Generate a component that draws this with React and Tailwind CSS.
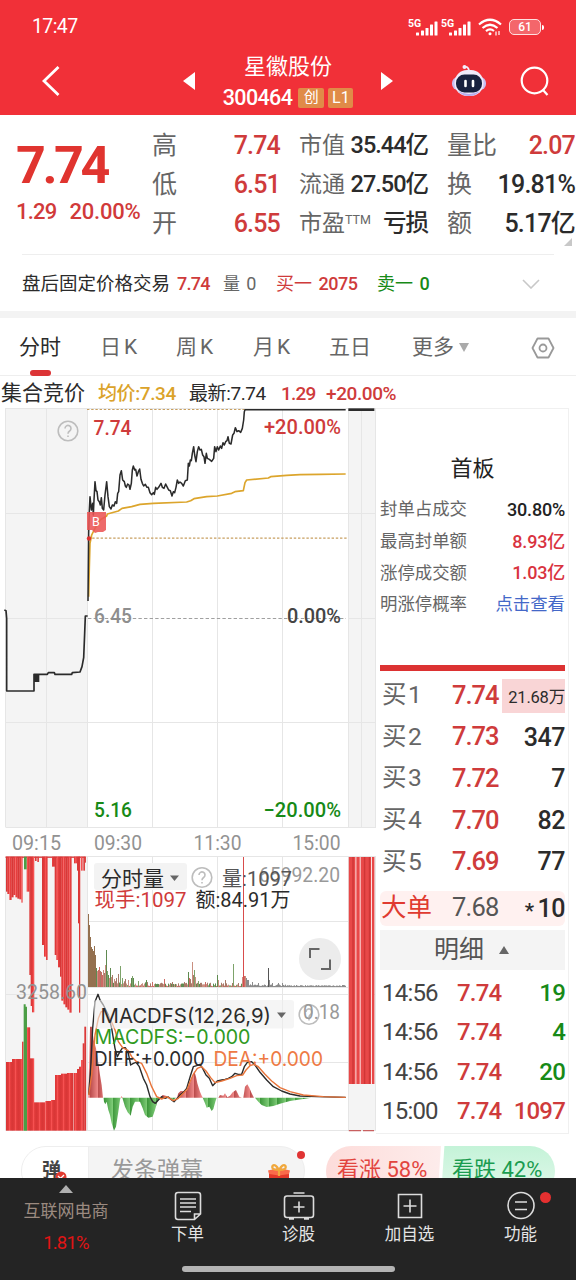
import { clsx } from 'clsx'

const RED = '#cf3b3b'
const GREEN = '#178a17'

const QUOTE_ROWS = [
  { a: '高', av: '7.74', b: '市值', bv: '35.44亿', c: '量比', cv: '2.07', up: true },
  { a: '低', av: '6.51', b: '流通', bv: '27.50亿', c: '换', cv: '19.81%' },
  { a: '开', av: '6.55', b: '市盈', sup: 'TTM', bv: '亏损', c: '额', cv: '5.17亿' },
]

const BOARD = [
  { label: '封单占成交', value: '30.80%', color: 'text-[#222]' },
  { label: '最高封单额', value: '8.93亿', color: 'text-[#d9333f]' },
  { label: '涨停成交额', value: '1.03亿', color: 'text-[#d9333f]' },
  { label: '明涨停概率', value: '点击查看', color: 'text-[#4468c8]' },
]

const BIDS = [
  { n: 1, price: '7.74', vol: '21.68万', hot: true },
  { n: 2, price: '7.73', vol: '347' },
  { n: 3, price: '7.72', vol: '7' },
  { n: 4, price: '7.70', vol: '82' },
  { n: 5, price: '7.69', vol: '77' },
]

const TRADES = [
  { time: '14:56', price: '7.74', vol: '19', color: 'text-[#178a17]' },
  { time: '14:56', price: '7.74', vol: '4', color: 'text-[#178a17]' },
  { time: '14:56', price: '7.74', vol: '20', color: 'text-[#178a17]' },
  { time: '15:00', price: '7.74', vol: '1097', color: 'text-[#cf3b3b]' },
]

// chart series, in thirds of a pixel
const PRICE = '264,603 266,400 268,330 270,290 274,330 278,310 280,345 282,300 285,245 288,272 291,275 294,300 298,305 301,315 304,293 307,325 311,330 315,285 320,245 324,290 328,320 333,327 337,315 342,318 346,305 350,310 353,280 356,275 360,225 364,212 368,240 373,245 376,258 379,262 383,252 387,255 390,268 394,250 397,210 400,198 404,210 407,208 411,228 415,215 419,207 423,238 427,250 431,258 436,253 441,262 445,262 450,278 455,284 460,278 463,283 467,262 471,268 476,262 483,250 487,262 492,265 497,252 502,262 506,270 511,272 516,288 520,275 524,278 528,262 532,240 536,250 540,246 545,250 550,258 556,242 562,240 565,190 568,198 571,180 574,182 577,160 581,140 584,165 588,185 592,155 596,140 600,150 604,148 608,165 612,170 615,190 619,160 622,175 628,178 635,184 641,175 644,140 648,155 652,140 656,150 661,138 665,145 669,128 673,135 677,125 681,122 684,110 688,130 693,132 698,105 702,100 706,83 711,95 716,92 722,97 727,85 731,60 733,35 735,29 1037,29'
const AVG = '266,590 268,500 270,430 275,405 285,385 300,360 320,348 322,342 355,333 366,325 395,320 420,313 460,310 560,306 572,302 582,296 620,290 652,288 695,280 705,275 730,272 735,248 740,240 805,234 812,230 860,226 900,224 960,223 1037,222'
const AUCTION = '13,630 18,632 20,655 20,873 102,873 102,823 142,823 145,818 163,818 165,823 215,823 217,818 240,816 246,800 251,773 254,700 256,648 263,648'

const DIFF = '266,330 272,250 278,130 285,50 294,28 300,45 310,60 325,90 335,130 345,190 352,215 360,200 368,188 376,188 385,205 392,240 400,235 408,232 418,245 430,280 440,300 450,335 458,350 466,355 475,345 485,335 495,340 505,336 515,345 522,350 532,340 540,330 550,322 560,310 572,270 580,245 590,242 600,238 608,250 618,270 628,280 638,302 645,295 652,288 665,285 675,283 685,280 695,275 705,265 715,268 725,268 733,245 742,232 755,230 765,240 780,262 800,285 820,305 845,318 870,327 900,333 950,335 1037,337'
const DEA = '266,330 275,270 285,150 295,100 303,80 315,80 330,100 345,135 355,170 368,188 385,197 395,215 410,230 425,235 440,265 455,305 470,335 485,342 500,335 520,347 535,340 550,325 562,312 570,290 580,268 592,250 605,245 618,258 632,278 645,293 665,288 690,280 710,272 728,270 738,255 750,242 762,238 775,245 795,268 815,288 840,308 870,320 910,330 970,335 1037,337'
const HIST_UP = 'M265 338V330L270 125H276L281 165 288 190 295 235 300 270 305 300 309 338ZM362 338L364 333 368 338ZM480 338L488 330 500 333 505 338ZM530 338L535 325 542 318 560 318 568 300 575 280 583 258 588 275 592 295 600 320 608 338ZM655 338L660 330 670 332 675 325 682 337 690 332 698 322 708 315 718 335 726 338ZM730 338L735 305 742 298 748 308 755 325 762 338Z'
const HIST_DOWN = 'M310 338L312 350 316 358 320 350 325 375 330 390 335 415 342 437 348 425 355 380 360 345 362 338ZM367 338L375 365 383 382 392 392 398 365 405 350 420 350 428 370 435 390 445 398 458 395 465 375 472 350 480 338ZM510 338L518 346 528 338ZM608 338L615 355 620 368 628 365 635 378 640 372 646 350 650 338ZM765 338L775 350 785 360 800 366 820 363 840 356 870 348 910 342 935 338Z'

// [x, width, bottom] bars hanging from the top of the auction column
const HANGING = [
  [18, 4, 125], [22, 6, 132], [28, 6, 150], [34, 6, 142], [40, 6, 135], [46, 6, 142], [52, 6, 146], [58, 6, 148], [64, 3, 158],
  [80, 8, 125], [88, 4, 375], [92, 4, 468], [96, 6, 487], [105, 4, 33], [112, 4, 36], [126, 6, 285], [132, 6, 320], [138, 4, 330],
  [156, 8, 50], [164, 5, 315], [169, 5, 330], [174, 6, 352], [180, 4, 380], [184, 6, 452], [190, 6, 463], [196, 6, 472], [202, 6, 479], [208, 6, 488],
  [222, 8, 40], [231, 3, 62], [234, 4, 220], [237, 3, 488], [243, 4, 62], [250, 4, 62], [255, 2, 38],
]

// [x, width, top] bars rising from the bottom
const STANDING = [
  [18, 18, 231], [36, 30, 222], [66, 4, 170], [81, 9, 127], [90, 12, 220], [102, 34, 352], [136, 17, 348], [153, 12, 345],
  [165, 18, 270], [183, 18, 266], [201, 19, 264], [222, 9, 264], [231, 6, 252], [237, 6, 245], [243, 5, 225], [248, 5, 175], [253, 5, 125],
]

const PEAKS = {
  0: 73, 1: 62, 2: 50, 3: 40, 4: 38, 5: 36, 6: 41, 7: 32, 8: 19, 9: 16, 10: 17, 11: 20, 12: 16, 13: 15, 14: 12, 15: 17, 16: 14, 17: 22, 18: 37,
  19: 16, 20: 12, 21: 9, 22: 19, 23: 10, 24: 12, 26: 8, 28: 9, 30: 13, 32: 21, 34: 9, 37: 8, 40: 7, 43: 9, 44: 11, 45: 9, 50: 6, 58: 7, 64: 5, 76: 8,
  84: 5, 96: 5, 100: 15, 101: 9, 102: 8, 104: 25, 105: 12, 106: 17, 107: 10, 110: 6, 117: 5, 129: 12, 130: 7, 137: 7, 144: 4, 145: 23, 154: 10, 155: 130,
  156: 11, 157: 11, 158: 9, 159: 7, 160: 7, 164: 5, 170: 4, 180: 19, 181: 7, 184: 4, 190: 4, 194: 4,
}

const VOLUME = Array.from({ length: 258 }, (_, i) => {
  const noise = Math.abs(Math.sin(i * 12.9898) * 43758.5453) % 1
  const decay = i < 60 ? 5 : i < 156 ? 3.5 : i < 200 ? 2 : 1.2
  const late = i > 157
  const color = late ? '#8b8b8b' : ['#cc6a64', '#7da36a', '#c98f80', '#5f8a50', '#a87a68'][Math.floor(noise * 5)]
  return { x: 88 + i, h: PEAKS[i] || 0.8 + noise * decay, color: i === 155 ? '#d84c4c' : i === 180 ? '#555' : i < 8 ? '#94704f' : color }
})

function Label({ x, y, w, size = 20.5, fill = RED, weight = 500, children }) {
  return (
    <text x={x} y={y} textLength={w} lengthAdjust="spacingAndGlyphs" fontSize={size} fill={fill} fontWeight={weight}>
      {children}
    </text>
  )
}

function Help({ cx, cy }) {
  return (
    <g>
      <circle cx={cx} cy={cy} r="9.8" fill="none" stroke="#bdbdbd" strokeWidth="1.6" />
      <path d={`M${cx - 3} ${cy - 2.5}a3 3 0 1 1 4.6 2.5q-1.6 1-1.6 2.8M${cx} ${cy + 4.5}v1.6`} fill="none" stroke="#bdbdbd" strokeWidth="1.6" />
    </g>
  )
}

function Chart() {
  return (
    <svg viewBox="0 408 376 726" className="h-[726px] w-[376px] shrink-0">
      <defs>
        <linearGradient id="stripes" gradientUnits="userSpaceOnUse" x1="0" y1="0" x2="18" y2="0" spreadMethod="repeat">
          <stop offset="0" stopColor="#d83636" />
          <stop offset=".4" stopColor="#e03a3a" />
          <stop offset=".55" stopColor="#fa5656" />
          <stop offset=".7" stopColor="#e84040" />
          <stop offset="1" stopColor="#d83636" />
        </linearGradient>
        <linearGradient id="upBars" gradientUnits="userSpaceOnUse" x1="6" y1="0" x2="30" y2="0" spreadMethod="repeat">
          <stop offset="0" stopColor="#b94a4a" />
          <stop offset="1" stopColor="#f08a8a" />
        </linearGradient>
        <linearGradient id="downBars" gradientUnits="userSpaceOnUse" x1="0" y1="0" x2="26" y2="0" spreadMethod="repeat">
          <stop offset="0" stopColor="#3c963a" />
          <stop offset="1" stopColor="#7fcc78" />
        </linearGradient>
      </defs>

      {/* Backgrounds and grid */}
      <path d="M5 409H87V827H5ZM348 409H376V827H348ZM5 857H87V1131H5ZM348 857H376V1131H348Z" fill="#f4f4f4" />
      <g stroke="#e6e6e6" strokeWidth="1" fill="none">
        <path d="M5.5 408.5H376M5.5 513.5H376M5.5 618.5H87M348 618.5H376M5.5 722.5H376M5.5 827.5H376" />
        <path d="M5.5 856.5H376M87 921.5H348M87 987.5H348M5.5 994.5H376M87 1062.5H348M5.5 1130.5H376" />
        <path d="M5.5 408V827M46.5 408V827M87.5 408V827M152.5 408V827M217.5 408V827M282.5 408V827M348.5 408V827M361.5 408V827M375.5 408V827" />
        <path d="M5.5 857V1130M46.5 857V1130M87.5 857V1130M152.5 857V1130M217.5 857V1130M282.5 857V1130M348.5 857V1130M375.5 857V1130" />
      </g>
      <path d="M87 409.5H245M88 538.2H348" stroke="#c79f60" strokeWidth="1.2" strokeDasharray="2.4 1.8" />
      <path d="M88 618.5H346" stroke="#a0a0a0" strokeWidth="1.1" strokeDasharray="3.4 2.2" />

      {/* Price */}
      <Help cx={68} cy={431} />
      <g transform="translate(0 400) scale(0.33333)" fill="none" strokeLinejoin="round">
        <polyline points={AUCTION} stroke="#2b2b2b" strokeWidth="5" />
        <rect x="102" y="824" width="16" height="22" fill="#2b2b2b" />
        <polyline points={AVG} stroke="#dca52c" strokeWidth="5" />
        <polyline points={PRICE} stroke="#2b2b2b" strokeWidth="4.6" />
        <path d="M1045 29H1123" stroke="#2b2b2b" strokeWidth="8" />
      </g>
      <path d="M87 512H106V530L103 532H98L95 533L92 530H87Z" fill="#ec5555" fillOpacity=".88" />
      <text x="92" y="525.5" fontSize="12.5" fontWeight="400" fill="#fff">B</text>
      <circle cx="89" cy="538.5" r="2.2" fill="#dd3030" />
      <Label x={93.5} y={434.5} w={38}>7.74</Label>
      <Label x={264} y={434} w={77}>+20.00%</Label>
      <Label x={94} y={623} w={38} fill="#8e8e8e">6.45</Label>
      <Label x={287} y={623} w={54} fill="#444">0.00%</Label>
      <Label x={94} y={817} w={38} fill={GREEN}>5.16</Label>
      <Label x={263.5} y={817} w={77.5} fill={GREEN}>−20.00%</Label>
      <Label x={12} y={849.5} w={49} fill="#929292" weight={400}>09:15</Label>
      <Label x={94} y={849.5} w={48} fill="#929292" weight={400}>09:30</Label>
      <Label x={193.5} y={849.5} w={48} fill="#929292" weight={400}>11:30</Label>
      <Label x={292.5} y={849.5} w={48} fill="#929292" weight={400}>15:00</Label>

      {/* Auction volume */}
      <rect x="5.5" y="856.5" width="80" height="1.4" fill="#d84444" />
      <g transform="translate(0 850) scale(0.33333)" fill="url(#stripes)">
        {HANGING.map(([x, w, y]) => <rect key={x} x={x} y="20" width={w + 0.8} height={y - 20} />)}
        <rect x="72" y="20" width="8" height="38" fill="#4b9e45" />
      </g>
      <g transform="translate(0 985) scale(0.33333)">
        {STANDING.map(([x, w, y]) => <rect key={x} x={x} y={y} width={w + 0.5} height={437 - y} fill="url(#stripes)" />)}
        <path d="M71 437V58H77V65H81V437Z" fill="#4b9e45" />
      </g>
      <path d="M348.8 857H374.4V1084H348.8Z" fill="#e84848" />
      <path d="M353 857V1084M364.6 857V1084M369.5 857V1084" stroke="#d03636" strokeWidth="1.4" />
      <path d="M355.9 857V1084M360.2 857V1084M371.5 857V1084" stroke="#fde0e0" strokeWidth="1" />
      <path d="M348.8 1130.6H361M363 1130.6H374" stroke="#c86060" strokeWidth="1.2" />

      {/* Volume */}
      {VOLUME.map(v => <rect key={v.x} x={v.x} y={987 - v.h} width="1" height={v.h} fill={v.color} />)}
      <Label x={16} y={998.5} w={71} fill="#929292" weight={400}>3258.60</Label>
      <rect x="94" y="863" width="93" height="27" rx="3" fill="#f3f3f3" />
      <Label x={101} y={885.5} w={63} size={21} fill="#2b2b2b" weight={400}>分时量</Label>
      <path d="M170 875.5H179L174.5 881Z" fill="#666" />
      <Help cx={202} cy={877.5} />
      <Label x={259} y={882} w={81} fill="#999" weight={400}>65992.20</Label>
      <Label x={222} y={885.5} w={70} size={20} fill="#555" weight={400}>量:1097</Label>
      <Label x={94.5} y={906.5} w={92} fill="#d03a3a" weight={400}>现手:1097</Label>
      <Label x={195.5} y={906.5} w={95} fill="#2b2b2b" weight={400}>额:84.91万</Label>
      <circle cx="320" cy="959" r="21" fill="#ececec" />
      <path d="M310 958V949H319.5M321 969H330V959.5" fill="none" stroke="#666" strokeWidth="2" />

      {/* MACD */}
      <g transform="translate(0 985) scale(0.33333)" fill="none" strokeLinejoin="round">
        <path d={HIST_UP} fill="url(#upBars)" />
        <path d={HIST_DOWN} fill="url(#downBars)" />
        <polyline points={DIFF} stroke="#2b2b2b" strokeWidth="4.2" />
        <polyline points={DEA} stroke="#e8743a" strokeWidth="4.2" />
      </g>
      <rect x="94" y="1000" width="200" height="28.5" rx="3" fill="#eee" fillOpacity=".6" />
      <g fontFamily="Inter">
        <Label x={100.5} y={1023} w={170.5} size={20} fill="#2b2b2b" weight={400}>MACDFS(12,26,9)</Label>
        <Label x={94.5} y={1044} w={156} size={20} fill="#2f9a1f" weight={400}>MACDFS:−0.000</Label>
        <Label x={94} y={1066} w={111} size={20} fill="#2b2b2b" weight={400}>DIFF:+0.000</Label>
        <Label x={213.5} y={1066} w={109.5} size={20} fill="#ee7a44" weight={400}>DEA:+0.000</Label>
      </g>
      <path d="M277 1012.5H286L281.5 1018Z" fill="#666" />
      <Help cx={309} cy={1014.5} />
      <Label x={303} y={1019} w={37} fill="#999" weight={400}>0.18</Label>
    </svg>
  )
}

function Signal() {
  return (
    <div className="flex w-[33px] items-start">
      <span className="w-[7px] text-[10.5px] leading-[10px] font-bold">5G</span>
      <svg viewBox="0 0 24 16" className="mt-[1px] h-4 w-6 shrink-0" fill="#fff">
        <rect x="1" y="12.5" width="3" height="3" rx=".5" />
        <rect x="6" y="10.5" width="3" height="5" rx=".5" />
        <rect x="10.5" y="8" width="3" height="7.5" rx=".5" />
        <rect x="15" y="4.5" width="3" height="11" rx=".5" />
        <rect x="19.5" y="1.5" width="3" height="14" rx=".5" />
      </svg>
    </div>
  )
}

function Header() {
  return (
    <header className="h-[115px] bg-[#f13038] text-white">
      <div className="flex h-[54px] items-center justify-between pr-[32px] pl-[32px]">
        <span className="text-[19.5px] tracking-[-0.6px]">17:47</span>
        <div className="flex items-center">
          <Signal />
          <Signal />
          <svg viewBox="0 0 24 18" className="mr-[7px] ml-[4px] h-[18px] w-6" fill="none" stroke="#fff" strokeWidth="2.2">
            <path d="M1 6.5Q12 -3 23 6.5M4.5 10Q12 3.5 19.5 10M8 13.2Q12 9.8 16 13" />
            <circle cx="12" cy="15.8" r="1.5" fill="#fff" stroke="none" />
            <path d="M18 13.5V17.5M21 13V17" strokeWidth="1.2" />
          </svg>
          <div className="flex h-[16px] w-[32px] items-center justify-center rounded-[5px] border-[1.5px] border-[#ffe0e0] bg-[#f4666b]">
            <span className="text-[12px] leading-none font-medium">61</span>
          </div>
          <span className="ml-[1px] h-[5px] w-[2px] rounded-r bg-white" />
        </div>
      </div>
      <div className="flex h-[54px] items-center">
        <svg viewBox="0 0 18 32" className="ml-[42px] h-8 w-[18px]" fill="none" stroke="#fff" strokeWidth="2.8">
          <path d="M16.5 2L2 16L16.5 30" />
        </svg>
        <svg viewBox="0 0 12 20" className="ml-[123px] h-5 w-3" fill="#fff"><path d="M12 1V19L0 10Z" /></svg>
        <div className="flex w-[186px] flex-col items-center">
          <h1 className="text-[22px] leading-[28px]">星徽股份</h1>
          <div className="mt-[5px] flex items-center gap-[4px]">
            <span className="mr-[2px] text-[21.5px] leading-[24px] font-medium tracking-[-0.6px]">300464</span>
            <span className="flex h-[20px] w-[26px] items-center justify-center rounded-[2px] bg-[#e08b48] text-[15px] leading-none">创</span>
            <span className="flex h-[20px] w-[25px] items-center justify-center rounded-[2px] bg-[#e08b48] text-[16px] leading-none">L1</span>
          </div>
        </div>
        <svg viewBox="0 0 12 20" className="h-5 w-3" fill="#fff"><path d="M0 1V19L12 10Z" /></svg>
        <svg viewBox="0 0 36 34" className="ml-[58px] h-[34px] w-9">
          <path d="M13 3.5q4-2 5 3" fill="none" stroke="#f3eefc" strokeWidth="1.8" />
          <circle cx="13.5" cy="3" r="2" fill="#f3eefc" />
          <rect x="1" y="13" width="34" height="13" rx="6" fill="#c9bef2" />
          <rect x="3.5" y="6" width="29" height="26" rx="12.5" fill="#efeafb" />
          <path d="M7 27q11 6 22 0q-4 5-11 5t-11-5" fill="#b9acee" />
          <rect x="5" y="10.5" width="26" height="18" rx="8.5" fill="#18213f" />
          <path d="M14.5 17V22M22 17V22" stroke="#fff" strokeWidth="2.6" strokeLinecap="round" />
        </svg>
        <svg viewBox="0 0 30 32" className="ml-[33px] h-8 w-[30px]" fill="none" stroke="#fff" strokeWidth="2.2">
          <circle cx="14.5" cy="15.5" r="12.8" />
          <path d="M23 25L27.5 30" />
        </svg>
      </div>
    </header>
  )
}

function Quote() {
  return (
    <section className="flex h-[139px] pt-[11px]">
      <div className="w-[152px] pl-[16px] text-[#e0342f]">
        <div className="mt-[14px] text-[52px] leading-[52px] font-bold tracking-[-3.4px]">7.74</div>
        <div className="mt-[7px] flex gap-[13px] text-[22px] leading-[26px] font-medium text-[#d13a3a]">
          <span className="tracking-[-0.8px]">1.29</span>
          <span className="tracking-[-0.2px]">20.00%</span>
        </div>
      </div>
      <div className="relative w-[424px]">
        {QUOTE_ROWS.map(r => (
          <div key={r.a} className="flex h-[39px] items-center text-[#666]">
            <span className="w-[48px] text-[25px] leading-none">{r.a}</span>
            <span className="w-[80px] text-right text-[25px] leading-none font-medium tracking-[-0.8px] text-[#cf3b3b]">{r.av}</span>
            <span className="ml-[19px] flex w-[129px] items-center justify-between whitespace-nowrap">
              <span className="flex text-[23px] leading-none">
                {r.b}
                {r.sup && <sup className="top-0 text-[12.5px] leading-[15px]">{r.sup}</sup>}
              </span>
              <span className="text-[23.5px] leading-none font-medium tracking-[-1px] text-[#2b2b2b]">{r.bv}</span>
            </span>
            <span className="ml-[19px] flex w-[128px] items-center justify-between whitespace-nowrap">
              <span className="text-[25px] leading-none">{r.c}</span>
              <span className={clsx('text-[25px] leading-none font-medium tracking-[-0.8px]', r.up ? 'text-[#cf3b3b]' : 'text-[#2b2b2b]')}>{r.cv}</span>
            </span>
          </div>
        ))}
        <svg viewBox="0 0 8 8" className="absolute right-[4px] bottom-[8px] h-2 w-2" fill="#c8c8c8"><path d="M8 0V8H0Z" /></svg>
      </div>
    </section>
  )
}

function AfterHours() {
  return (
    <section className="mx-[22px] flex h-[57px] items-center border-t border-[#eee] pt-[2px] text-[17px] leading-none whitespace-nowrap">
      <span className="w-[155px] text-[18.5px] text-[#2b2b2b]">盘后固定价格交易</span>
      <span className="w-[46px] text-[18px] font-medium tracking-[-0.7px] text-[#cf3b3b]">7.74</span>
      <span className="w-[53px] text-[#666]">量 <span className="ml-[2px] text-[18px]">0</span></span>
      <span className="w-[101px] text-[18px] text-[#cf3b3b]">买一 <span className="ml-[2px] font-medium tracking-[-0.5px]">2075</span></span>
      <span className="text-[18px] text-[#178a17]">卖一 <span className="ml-[2px] font-medium">0</span></span>
      <svg viewBox="0 0 18 10" className="mr-[14px] ml-auto h-[10px] w-[18px]" fill="none" stroke="#c8c8c8" strokeWidth="1.6"><path d="M1 1L9 9L17 1" /></svg>
    </section>
  )
}

function Tabs() {
  return (
    <nav className="flex h-[58px] items-center border-b border-[#eee] pt-[2px] text-[21px] leading-none text-[#666]">
      <span className="relative ml-[19px] w-[81px] text-[#2b2b2b]">
        分时
        <span className="absolute top-[33px] left-[11px] h-[6px] w-[21px] rounded-[3px] bg-[#dc3436]" />
      </span>
      <span className="w-[76px] tracking-[3px]">日K</span>
      <span className="w-[77px] tracking-[3px]">周K</span>
      <span className="w-[76px] tracking-[3px]">月K</span>
      <span className="w-[83px]">五日</span>
      <span className="flex items-center gap-[5px]">
        更多
        <svg viewBox="0 0 10 9" className="h-[9px] w-[10px]" fill="#aaa"><path d="M0 0H10L5 9Z" /></svg>
      </span>
      <svg viewBox="0 0 24 24" className="mr-[21px] ml-auto h-6 w-6" fill="none" stroke="#999" strokeWidth="1.8">
        <path d="M6.5 2.5H17.5L22.5 12L17.5 21.5H6.5L1.5 12Z" strokeLinejoin="round" />
        <circle cx="12" cy="12" r="3.5" />
      </svg>
    </nav>
  )
}

function OrderBook() {
  return (
    <aside className="flex w-[193px] flex-col border-y border-r border-[#f0f0f0] pr-[3px] pl-[4px]">
      <h2 className="mt-[45px] text-center text-[22px] leading-[30px] text-[#222]">首板</h2>
      <div className="mt-[10px]">
        {BOARD.map(b => (
          <div key={b.label} className="flex h-[31.7px] items-center justify-between text-[17.4px] leading-none">
            <span className="text-[#666]">{b.label}</span>
            <span className={clsx(b.color, b.value !== '点击查看' && 'text-[18px] font-medium tracking-[-0.2px]')}>{b.value}</span>
          </div>
        ))}
      </div>
      <div className="mt-[44px] h-[6px] bg-[#dc3232]" />
      <div className="mt-[4px]">
        {BIDS.map(b => (
          <div key={b.n} className="flex h-[41.6px] items-center leading-none">
            <span className="w-[72px] pl-[2px] text-[24.5px] tracking-[1.5px] text-[#666]">买{b.n}</span>
            <span className="w-[50px] text-[25.5px] font-medium tracking-[-1px] text-[#cf3b3b]">{b.price}</span>
            {b.hot ? (
              <span className="flex h-[34px] w-[63px] items-center justify-end bg-[#f9d5d6] pt-[6px] text-[16.5px] tracking-[-0.2px] text-[#2b2b2b]">{b.vol}</span>
            ) : (
              <span className="ml-auto text-[25px] font-medium tracking-[-0.5px] text-[#2b2b2b]">{b.vol}</span>
            )}
          </div>
        ))}
      </div>
      <div className="mt-[8px] flex h-[35px] items-center rounded-[6px] bg-[#fff1f0] leading-none">
        <span className="w-[72px] pl-[1px] text-[25.5px] text-[#e03a30]">大单</span>
        <span className="text-[25.5px] tracking-[-0.8px] text-[#555]">7.68</span>
        <span className="ml-auto flex items-center text-[25px] font-medium tracking-[-0.5px] text-[#2b2b2b]">
          <span className="mr-[4px] pt-[7px] text-[21px]">*</span>10
        </span>
      </div>
      <div className="mt-[4px] flex h-[40px] items-center justify-center gap-[15px] bg-[#f4f4f4] pr-[2px] text-[25px] leading-none text-[#555]">
        明细
        <svg viewBox="0 0 10 8" className="h-2 w-[10px]" fill="#666"><path d="M0 8H10L5 0Z" /></svg>
      </div>
      <div className="mt-[3px]">
        {TRADES.map((t, i) => (
          <div key={i} className="flex h-[39.6px] items-center text-[24px] leading-none font-medium tracking-[-0.8px]">
            <span className="w-[77px] pl-[2px] font-normal text-[#444]">{t.time}</span>
            <span className="text-[#cf3b3b]">{t.price}</span>
            <span className={clsx('ml-auto', t.color)}>{t.vol}</span>
          </div>
        ))}
      </div>
    </aside>
  )
}

function BulletBar() {
  return (
    <section className="flex h-[44px] items-end justify-between overflow-hidden pr-[21px] pl-[21px]">
      <div className="relative h-[32px] w-[284px]">
        <div className="flex h-[50px] overflow-hidden rounded-[25px] border border-[#eee] bg-[#f4f4f4] leading-none">
          <div className="w-[67px] border-r border-[#eee] bg-white pt-[14px] pl-[20px] text-[19px] font-bold text-[#444]">弹</div>
          <div className="pt-[12px] pl-[22px] text-[23px] text-[#999]">发条弹幕</div>
        </div>
        <svg viewBox="0 0 12 12" className="absolute top-[25px] left-[34px] h-3 w-3">
          <circle cx="6" cy="6" r="5.5" fill="#e23b30" />
          <path d="M3 5L5.5 7.5L9 4" fill="none" stroke="#fff" strokeWidth="1.3" />
        </svg>
        <svg viewBox="0 0 24 20" className="absolute top-[17px] left-[246px] h-5 w-6">
          <path d="M2 8L12 5L22 8V20H2Z" fill="#e3392a" />
          <path d="M1 7.5L12 5L23 7.5L22 11L12 12.5L2 11Z" fill="#fa6a4a" />
          <path d="M12 7Q4 7 5.5 3Q8 0 12 7Q16 0 18.5 3Q20 7 12 7V13" fill="none" stroke="#f0a83c" strokeWidth="2.2" />
        </svg>
        <span className="absolute top-[5px] right-0 h-[8px] w-[8px] rounded-full bg-[#e03434]" />
      </div>
      <div className="flex h-[32px] w-[229px] items-start text-[22px] leading-none">
        <div className="h-[50px] w-[115px] rounded-l-[25px] bg-linear-to-r from-[#fddcda] to-[#fdeceb] pt-[13px] pl-[11px] whitespace-nowrap text-[#e2453f] [clip-path:polygon(0_0,100%_0,97%_100%,0_100%)]">看涨 58%</div>
        <div className="h-[50px] w-[114px] rounded-r-[25px] bg-linear-to-b from-[#c4f3d8] to-[#e3f8ec] pt-[13px] pl-[11px] whitespace-nowrap text-[#1a9c50] [clip-path:polygon(3%_0,100%_0,100%_100%,0_100%)]">看跌 42%</div>
      </div>
    </section>
  )
}

function NavItem({ label, dot, children }) {
  return (
    <div className="relative flex flex-1 flex-col items-center pt-[12px]">
      <svg viewBox="0 0 32 32" className="h-8 w-8" fill="none" stroke="#dcdcdc" strokeWidth="1.6">{children}</svg>
      <span className="mt-[4px] text-[16.5px] leading-[18px] text-[#e4e4e4]">{label}</span>
      {dot && <span className="absolute top-[14px] left-[75px] h-[11px] w-[11px] rounded-full bg-[#e53030]" />}
    </div>
  )
}

function BottomNav() {
  return (
    <footer className="flex h-[102px] flex-col bg-[#242424]">
      <div className="flex h-[88px]">
        <div className="flex w-[132px] flex-col items-center pt-[7px]">
          <svg viewBox="0 0 14 8" className="h-2 w-[14px]" fill="#b0b0b0"><path d="M0 8H14L7 0Z" /></svg>
          <span className="mt-[8px] text-[17px] leading-[20px] text-[#9b8a80]">互联网电商</span>
          <span className="mt-[13px] text-[18.5px] leading-[18px] tracking-[-0.8px] text-[#e01414]">1.81%</span>
        </div>
        <NavItem label="下单">
          <path d="M6 2.500H26Q28.500 2.500 28.500 5V24L22.500 29.500H6Q3.500 29.500 3.500 27V5Q3.500 2.500 6 2.500ZM8 9H24M8 13H24M8 17H24M8 21.500H19M22.500 29V24H28" />
        </NavItem>
        <NavItem label="诊股">
          <path d="M4 6H28Q30.500 6 30.500 8.500V25Q30.500 27.500 28 27.500H4Q1.500 27.500 1.500 25V8.500Q1.500 6 4 6ZM10.500 3H21.500M6 29H11M21 29H26M16 11.500V22.500M10.500 17H21.500" />
        </NavItem>
        <NavItem label="加自选">
          <path d="M4.500 4.500H27.500V27.500H4.500ZM16 9.500V22.500M9.500 16H22.500" />
        </NavItem>
        <NavItem label="功能" dot>
          <circle cx="16" cy="15.500" r="13" />
          <path d="M10 12H22M10 19.500H22" />
        </NavItem>
      </div>
      <span className="mx-auto h-[6px] w-[213px] rounded-full bg-[#b4b4b4]" />
    </footer>
  )
}

export default function App() {
  return (
    <div className="flex h-[1280px] w-[576px] flex-col overflow-hidden bg-white font-['Roboto','Noto_Sans_CJK_SC',sans-serif]">
      <Header />
      <Quote />
      <AfterHours />
      <div className="h-[7px] shrink-0 bg-[#f3f3f3]" />
      <Tabs />
      <div className="flex h-[32px] items-center pt-[2px] pl-px leading-none whitespace-nowrap">
        <span className="w-[97px] text-[21px] text-[#2b2b2b]">集合竞价</span>
        <span className="w-[91px] text-[19px] font-medium tracking-[-0.4px] text-[#dba32a]">均价:7.34</span>
        <span className="w-[92px] text-[19px] tracking-[-0.4px] text-[#2b2b2b]">最新:7.74</span>
        <span className="w-[45px] text-[19px] font-medium tracking-[-0.8px] text-[#cf3b3b]">1.29</span>
        <span className="text-[19px] font-medium tracking-[-0.4px] text-[#cf3b3b]">+20.00%</span>
      </div>
      <main className="flex h-[726px] shrink-0">
        <Chart />
        <OrderBook />
      </main>
      <BulletBar />
      <BottomNav />
    </div>
  )
}
